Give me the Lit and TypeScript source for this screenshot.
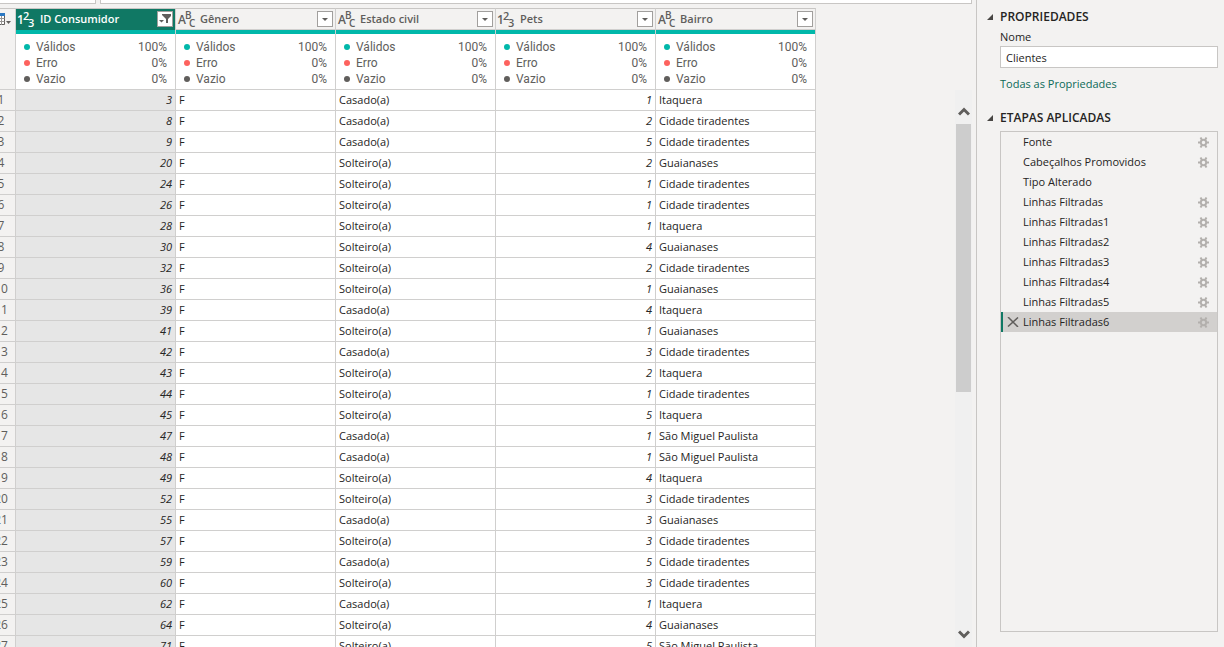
import { LitElement, html, css, svg, nothing } from "lit";
import { customElement, state } from "lit/decorators.js";
import { classMap } from "lit/directives/class-map.js";

type Kind = "number" | "text";
interface Column { name: string; kind: Kind; filtered?: boolean; }
interface Step { name: string; settings: boolean; }

const COLUMNS: Column[] = [
  { name: "ID Consumidor", kind: "number", filtered: true },
  { name: "Gênero", kind: "text" },
  { name: "Estado civil", kind: "text" },
  { name: "Pets", kind: "number" },
  { name: "Bairro", kind: "text" },
];

const C = "Casado(a)";
const S = "Solteiro(a)";
const IT = "Itaquera";
const CT = "Cidade tiradentes";
const GU = "Guaianases";
const SM = "São Miguel Paulista";

const ROWS: (string | number)[][] = [
  [3, "F", C, 1, IT], [8, "F", C, 2, CT], [9, "F", C, 5, CT], [20, "F", S, 2, GU],
  [24, "F", S, 1, CT], [26, "F", S, 1, CT], [28, "F", S, 1, IT], [30, "F", S, 4, GU],
  [32, "F", S, 2, CT], [36, "F", S, 1, GU], [39, "F", C, 4, IT], [41, "F", S, 1, GU],
  [42, "F", C, 3, CT], [43, "F", S, 2, IT], [44, "F", S, 1, CT], [45, "F", S, 5, IT],
  [47, "F", C, 1, SM], [48, "F", C, 1, SM], [49, "F", S, 4, IT], [52, "F", S, 3, CT],
  [55, "F", C, 3, GU], [57, "F", S, 3, CT], [59, "F", C, 5, CT], [60, "F", S, 3, CT],
  [62, "F", C, 1, IT], [64, "F", S, 4, GU], [71, "F", S, 5, SM],
];

const STEPS: Step[] = [
  { name: "Fonte", settings: true },
  { name: "Cabeçalhos Promovidos", settings: true },
  { name: "Tipo Alterado", settings: false },
  { name: "Linhas Filtradas", settings: true },
  { name: "Linhas Filtradas1", settings: true },
  { name: "Linhas Filtradas2", settings: true },
  { name: "Linhas Filtradas3", settings: true },
  { name: "Linhas Filtradas4", settings: true },
  { name: "Linhas Filtradas5", settings: true },
  { name: "Linhas Filtradas6", settings: true },
];

const QUALITY = [
  { label: "Válidos", value: "100%", tone: "valid" },
  { label: "Erro", value: "0%", tone: "error" },
  { label: "Vazio", value: "0%", tone: "empty" },
];

@customElement("data-grid")
export class DataGrid extends LitElement {
  static styles = css`
    :host { display: block; overflow: hidden; min-width: 0; }
    .grid {
      border-collapse: separate; border-spacing: 0; table-layout: fixed;
      width: 824px; margin-left: -8px;
      font: 11px/20px "Open Sans", "Noto Sans", sans-serif; color: #252423;
    }
    .col-index { width: 24px; }
    th, td { padding: 0; border-right: 1px solid #d0cfce; border-bottom: 1px solid #d0cfce; text-align: left; font-weight: 400; }
    thead th { vertical-align: top; border-top: 1px solid #c8c6c4; background: #f3f2f1; }
    .head { display: flex; align-items: center; height: 20px; padding: 0 2px; gap: 4px; color: #605e5c; border-bottom: 1px solid #d0cfce; }
    .head.on { background: #107864; color: #fff; border-bottom-color: #107864; }
    .type { border: 0; padding: 0; background: none; color: inherit; width: 18px; height: 18px; flex: none; }
    .type svg { display: block; }
    .name { flex: 1; font-weight: 600; font-size: 11px; overflow: hidden; white-space: nowrap; }
    .drop { display: grid; place-items: center; width: 16px; height: 16px; padding: 0; border: 1px solid #a19f9d; background: #fff; color: #605e5c; flex: none; }
    .quality { display: grid; margin: 0; padding: 5px 8px 2px; border-top: 4px solid #01b8aa; background: #fff; color: #605e5c; font: 12px/16px Roboto, sans-serif; }
    .stat { display: flex; align-items: center; }
    .dot { width: 6px; height: 6px; border-radius: 50%; margin-right: 6px; }
    .valid { background: #01b8aa; }
    .error { background: #fd625e; }
    .empty { background: #605e5c; }
    dt { flex: 1; }
    dd { margin: 0; }
    .corner { padding: 4px 0 0 3px; }
    .table-menu { display: block; border: 0; padding: 0; background: none; color: #605e5c; }
    tbody th { background: #f3f2f1; color: #605e5c; padding-right: 5px; font-size: 12px; text-align: center; }
    tbody td { background: #fff; padding: 0 3px; white-space: nowrap; }
    tbody .num { text-align: right; font-style: italic; }
    tbody .selected { background: #e6e6e6; }
  `;

  private typeIcon(kind: Kind) {
    return kind === "number"
      ? svg`<text x="-1" y="14" font-size="12">1</text><text x="5" y="10" font-size="11">2</text><text x="10" y="17" font-size="11">3</text>`
      : svg`<text x="0" y="14" font-size="12">A</text><text x="7" y="9" font-size="10">B</text><text x="11" y="17" font-size="10">C</text>`;
  }

  private header(c: Column) {
    return html`<th scope="col">
      <div class=${classMap({ head: true, on: !!c.filtered })}>
        <button class="type" aria-label="Tipo de dados">
          <svg width="18" height="18" fill="currentColor" font-family="Open Sans, sans-serif" font-weight="600" overflow="visible">${this.typeIcon(c.kind)}</svg>
        </button>
        <span class="name">${c.name}</span>
        <button class="drop" aria-label="Filtrar ${c.name}">
          ${c.filtered
            ? html`<svg width="14" height="14" fill="currentColor"><path d="M4 2h9v2l-3 3v4H8V7L4 3z"/><path d="M1 8h5L3.500 10.500z"/></svg>`
            : html`<svg width="6" height="3" fill="currentColor"><path d="M0 0h6L3 3z"/></svg>`}
        </button>
      </div>
      <dl class="quality">
        ${QUALITY.map((q) => html`<div class="stat"><span class="dot ${q.tone}"></span><dt>${q.label}</dt><dd>${q.value}</dd></div>`)}
      </dl>
    </th>`;
  }

  render() {
    return html`<table class="grid">
      <colgroup><col class="col-index" />${COLUMNS.map(() => html`<col />`)}</colgroup>
      <thead>
        <tr>
          <th class="corner">
            <button class="table-menu" aria-label="Menu da tabela">
              <svg width="18" height="13" fill="none" stroke="currentColor">
                <path d="M.5 .5h9v11h-9z" fill="#fff"/>
                <path d="M.5 5.500h9M.5 8.500h9M6.500 3v9" stroke="#979593"/>
                <path d="M0 0h10v3H0z" fill="#2b78c2" stroke="none"/>
                <path d="M11 8h5l-2.500 3z" fill="currentColor" stroke="none"/>
              </svg>
            </button>
          </th>
          ${COLUMNS.map((c) => this.header(c))}
        </tr>
      </thead>
      <tbody>
        ${ROWS.map((r, i) => html`<tr>
          <th scope="row">${i + 1}</th>
          ${r.map((v, j) => html`<td class=${classMap({ num: COLUMNS[j].kind === "number", selected: j === 0 })}>${v}</td>`)}
        </tr>`)}
      </tbody>
    </table>`;
  }
}

@customElement("query-settings")
export class QuerySettings extends LitElement {
  @state() private current = STEPS.length - 1;

  static styles = css`
    :host { display: flex; flex-direction: column; box-sizing: border-box; padding: 8px 6px 15px 10px; border-left: 1px solid #c8c6c4; font: 11px/16px "Open Sans", "Noto Sans", sans-serif; color: #252423; }
    .title { display: flex; align-items: center; gap: 7px; margin: 0; font-size: 12px; line-height: 18px; font-weight: 600; }
    .body { display: flex; flex-direction: column; padding-left: 13px; }
    label { padding-top: 2px; line-height: 18px; }
    .field { box-sizing: border-box; width: 100%; height: 22px; padding: 0 5px; border: 1px solid #c8c6c4; background: #fff; font: inherit; color: inherit; }
    .all { align-self: flex-start; margin: 8px 0 17px; color: #0b6a58; text-decoration: none; }
    .steps-body { flex: 1; padding-top: 4px; }
    .steps { flex: 1; margin: 0; padding: 0; list-style: none; border: 1px solid #c8c6c4; }
    .step { display: flex; align-items: center; height: 20px; padding-right: 8px; border-left: 2px solid transparent; }
    .step.on { background: #d2d0ce; border-left-color: #107864; }
    button { border: 0; padding: 0; background: none; font: inherit; color: inherit; }
    .remove { display: grid; place-items: center; width: 20px; color: #605e5c; }
    .label { flex: 1; text-align: left; white-space: nowrap; }
    .gear { color: #b3b0ad; display: grid; }
  `;

  private arrow() {
    return html`<svg width="6" height="6" aria-hidden="true"><path d="M6 0v6H0z" fill="#484644"/></svg>`;
  }

  render() {
    return html`
      <h2 class="title">${this.arrow()}PROPRIEDADES</h2>
      <div class="body">
        <label for="name">Nome</label>
        <input class="field" id="name" type="text" value="Clientes" />
        <a class="all" href="#propriedades">Todas as Propriedades</a>
      </div>
      <h2 class="title">${this.arrow()}ETAPAS APLICADAS</h2>
      <div class="body steps-body">
        <ul class="steps">
          ${STEPS.map((s, i) => html`<li class=${classMap({ step: true, on: i === this.current })}>
            <span class="remove">${i === this.current
              ? html`<button aria-label="Excluir etapa"><svg width="12" height="10" fill="none" stroke="currentColor" stroke-width="1.500" style="display:block"><path d="M1 0l10 10M11 .5L1 9.500"/></svg></button>`
              : nothing}</span>
            <button class="label" @click=${() => (this.current = i)}>${s.name}</button>
            ${s.settings
              ? html`<button class="gear" aria-label="Editar configurações"><svg width="11" height="11" fill="none" stroke="currentColor" stroke-width="2"><circle cx="5.500" cy="5.500" r="2.700"/><path d="M0 5.500h2M9 5.500h2M2.500 .5L4 3M8.500 .5L7 3M2.500 10.500L4 8M8.500 10.500L7 8"/></svg></button>`
              : nothing}
          </li>`)}
        </ul>
      </div>`;
  }
}

@customElement("app-root")
export class AppRoot extends LitElement {
  static styles = css`
    :host { display: grid; grid-template-columns: minmax(0, 1fr) 248px; height: 100vh; overflow: hidden; background: #f3f2f1; }
    .main { display: flex; flex-direction: column; min-height: 0; }
    .formula { display: grid; grid-template-columns: 96px 1fr; gap: 4px; height: 4px; flex: none; margin: 0 4px 4px 0; }
    .formula div { background: #fff; border: solid #c8c6c4; border-width: 0 1px 1px 0; }
    .formula div + div { border-left-width: 1px; }
    .work { flex: 1; display: flex; justify-content: space-between; min-height: 0; }
    .scroll { display: flex; flex-direction: column; width: 17px; margin: 82px 4px 0 0; background: #f0f0f0; color: #605e5c; }
    .scroll button { border: 0; padding: 0; background: none; color: inherit; display: grid; place-items: center; height: 26px; flex: none; }
    .scroll .up { margin-top: 8px; }
    .track { flex: 1; display: flex; }
    .thumb { width: 15px; height: 54%; margin-left: 1px; background: #cdcdcd; }
  `;

  render() {
    return html`
      <div class="main">
        <div class="formula"><div></div><div></div></div>
        <div class="work">
          <data-grid></data-grid>
          <div class="scroll">
            <button class="up" aria-label="Rolar para cima"><svg width="12" height="9" fill="none" stroke="currentColor" stroke-width="3"><path d="M1 7.500l5-5 5 5"/></svg></button>
            <div class="track"><div class="thumb"></div></div>
            <button aria-label="Rolar para baixo"><svg width="12" height="9" fill="none" stroke="currentColor" stroke-width="3"><path d="M1 1.500l5 5 5-5"/></svg></button>
          </div>
        </div>
      </div>
      <query-settings></query-settings>`;
  }
}
